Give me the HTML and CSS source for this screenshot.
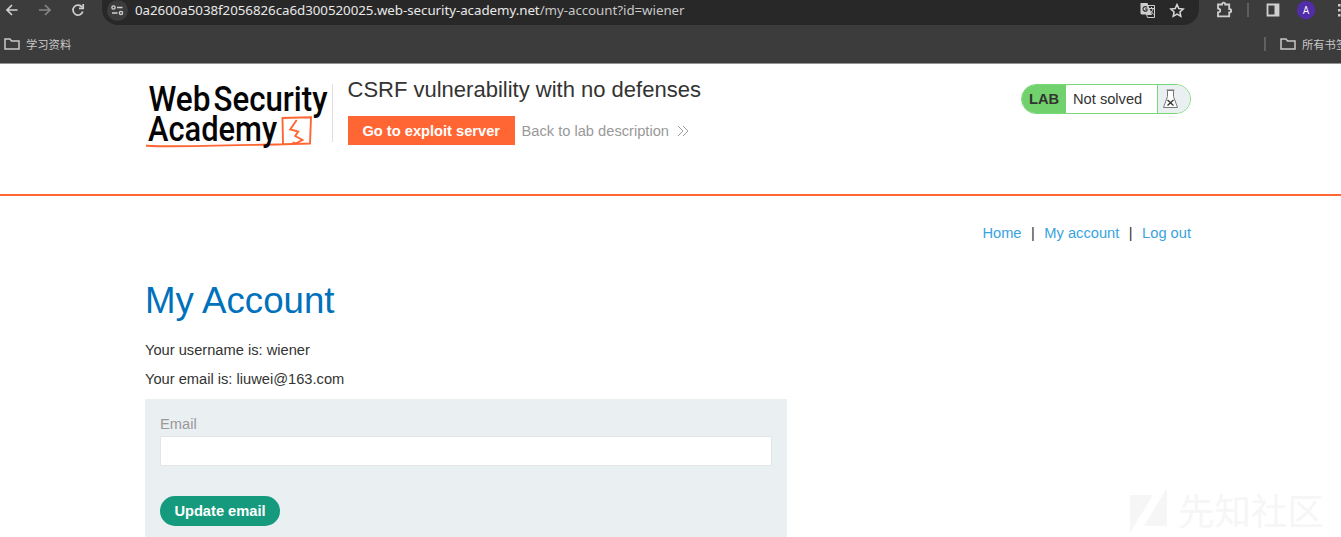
FILE: index.html
```html
<!DOCTYPE html>
<html lang="en">
<head>
<meta charset="utf-8">
<title>CSRF vulnerability with no defenses</title>
<link rel="stylesheet" href="styles.css">
</head>
<body>
<div class="browser">
  <div class="toolbar">
    <svg class="nav-icons" width="100" height="24" viewBox="0 0 100 24" fill="none" stroke="#d0d0d0" stroke-width="1.7">
      <path d="M17.500 10H7.500M12 5L7 10l5 5"/>
      <path stroke="#858585" d="M39 10h10.500M45 5l5 5-5 5"/>
      <path d="M82 7A5 5 0 1 0 82.800 11.500M83.200 4v4.300H79"/>
    </svg>
    <div class="address">
      <div class="site-info">
        <svg width="21" height="21" viewBox="0 0 21 21" fill="none" stroke="#d0d0d0" stroke-width="1.400"><circle cx="6.500" cy="7.500" r="1.600"/><path d="M10 7.500h5.500M5 13h5.500"/><circle cx="14" cy="13" r="1.600"/></svg>
      </div>
      <div class="url"><span class="domain">0a2600a5038f2056826ca6d300520025.web-security-academy.net</span><span class="path">/my-account?id=wiener</span></div>
      <svg class="address-icons" width="48" height="22" viewBox="0 0 48 22">
        <path d="M1.500 3h7l3.700 11.500H2.500l-1-1z" fill="#cecece"/>
        <path d="M8.200 5.500h7.300v12H8.500l-1-3h5z" fill="none" stroke="#cecece"/>
        <path d="M8 7.300A2.300 2.300 0 1 0 8 10.500V9H6" fill="none" stroke="#353535" stroke-width="1.200"/>
        <path d="M10 8.500h5M12.500 7v1.500M14 9c-.5 2-1.500 3-3 4.500M11.500 10.500l3 4" fill="none" stroke="#cecece"/>
        <path d="M38 4.500l1.800 4 4.400.5-3.300 3 .9 4.300-3.800-2.200-3.800 2.200.9-4.300-3.300-3 4.400-.5z" fill="none" stroke="#d8d8d8" stroke-width="1.500"/>
      </svg>
    </div>
    <svg class="right-icons" width="142" height="24" viewBox="0 0 142 24" fill="none" stroke="#cfcfcf" stroke-width="1.800">
      <path d="M19 4.500h4c0-2.400 3.200-2.400 3.200 0h4V9c2.700 0 2.700 3.400 0 3.400v4H19v-4c3-.2 3-3.600 0-3.900z"/>
      <path d="M49 3v14" stroke="#626262"/>
      <path d="M68.500 4.500h11v11h-11z"/><path d="M75.500 4h4v12h-4z" fill="#cfcfcf" stroke="none"/>
      <circle cx="107" cy="10" r="9.200" fill="#512da8" stroke="none"/>
      <text x="107" y="13.500" text-anchor="middle" class="avatar">A</text>
      <path d="M140.300 4v2.500M140.300 9v2.500M140.300 14v2.500" stroke-width="2.500"/>
    </svg>
  </div>
  <div class="bookmarks">
    <svg width="16" height="12" viewBox="0 0 16 12" fill="none" stroke="#c8c8c8" stroke-width="1.500"><path d="M1 1h5l1.500 2H15v8H1z"/></svg>
    <span class="folder-name">学习资料</span>
    <span class="divider"></span>
    <svg width="16" height="12" viewBox="0 0 16 12" fill="none" stroke="#c8c8c8" stroke-width="1.500"><path d="M1 1h5l1.500 2H15v8H1z"/></svg>
    <span class="folder-name">所有书签</span>
  </div>
</div>
<header class="lab-header">
  <svg class="logo" width="187" height="70" viewBox="0 0 187 70">
    <path d="M1 65.500C12 67.500 60 66 138 64.200L137.500 38l28.500-.8-1 26.300-26.500.7" fill="none" stroke="#ff6633" stroke-width="1.900"/>
    <path d="M151.700 40l-6.500 9.500 8 2-3 4.500 7.300 4-6.500 3.300-3.500-1" fill="none" stroke="#ff6633" stroke-width="1.900"/>
    <g class="logo-text">
      <text x="3.500" y="31" textLength="62" lengthAdjust="spacingAndGlyphs">Web</text>
      <text x="68.500" y="31" textLength="114" lengthAdjust="spacingAndGlyphs">Security</text>
      <text x="3" y="60.700" textLength="129" lengthAdjust="spacingAndGlyphs">Academy</text>
    </g>
  </svg>
  <div class="lab-title">
    <h2>CSRF vulnerability with no defenses</h2>
    <div class="actions">
      <a class="exploit">Go to exploit server</a>
      <a class="back">Back to lab description</a>
      <svg width="12" height="12" viewBox="0 0 12 12" fill="none" stroke="#a0a0a0"><path d="M1 1l5 5-5 5M6 1l5 5-5 5"/></svg>
    </div>
  </div>
  <div class="status">
    <strong>LAB</strong><span>Not solved</span>
    <div class="flask"><svg width="17" height="20" viewBox="0 0 17 20" fill="none" stroke="#777"><path fill="#fff" d="M5.500 1.500v6L1.500 18.500h14l-4-11v-6z"/><path d="M4.500 1h8"/><path stroke="#333" stroke-width="1.300" d="M5.500 11l6 5.500M11.500 11l-6 5.500"/></svg></div>
  </div>
</header>
<main class="content">
  <nav><a>Home</a><span>|</span><a>My account</a><span>|</span><a>Log out</a></nav>
  <h1>My Account</h1>
  <p>Your username is: wiener</p>
  <p>Your email is: liuwei@163.com</p>
  <form>
    <label for="email">Email</label>
    <input id="email" type="email">
    <button type="button">Update email</button>
  </form>
</main>
<div class="watermark">
  <svg width="39" height="46" viewBox="0 0 39 46" fill="#f6f6f6"><path d="M1 7h23L1 45zM38 0v38H15z"/></svg>
  <span>先知社区</span>
</div>
</body>
</html>
```
FILE: styles.css
```css
* { box-sizing: border-box; }
body {
  margin: 0;
  height: 537px;
  overflow: hidden;
  position: relative;
  background: #fff;
  color: #333332;
  font: 14.67px/20px "Liberation Sans", Arial, sans-serif;
}
.browser {
  height: 64px;
  background: #3c3c3c;
  border-bottom: 1px solid #929292;
  overflow: hidden;
}
.toolbar { display: flex; height: 25px; }
.nav-icons { margin-right: 2px; flex: none; }
.address {
  display: flex;
  width: 1097px;
  height: 25px;
  flex: none;
  background: #282828;
  border-radius: 0 0 16px 16px;
}
.site-info {
  width: 21px;
  height: 21px;
  margin-left: 5px;
  border-radius: 50%;
  background: #3c3c3c;
}
.url {
  width: 1004px;
  margin-left: 7px;
  white-space: nowrap;
  font: 13.33px/20px "Noto Sans", sans-serif;
  letter-spacing: -0.045px;
}
.domain { color: #e8e8e8; }
.path { color: #c7c7c7; }
.address-icons { flex: none; }
.right-icons { flex: none; }
.avatar { fill: #fff; stroke: none; font: 10px Roboto, sans-serif; }
.bookmarks {
  display: flex;
  align-items: center;
  height: 38px;
  padding-left: 4px;
}
.bookmarks svg { flex: none; }
.folder-name {
  margin-left: 6px;
  color: #c9c9c9;
  white-space: nowrap;
  font: 11.3px/16px "Noto Sans CJK SC", sans-serif;
}
.divider { width: 2px; height: 14px; margin: 0 14px 0 auto; background: #606060; flex: none; }
.bookmarks .folder-name:last-child { width: 39px; }
.lab-header {
  display: flex;
  height: 132px;
  padding: 16px 150px 0 145px;
  border-bottom: 2px solid #ff6633;
}
.logo { flex: none; }
.logo-text { font: 500 35px Roboto, sans-serif; fill: #050505; }
.lab-title { height: 58px; margin-top: 4px; padding-left: 14.500px; border-left: 1px solid #dedede; }
h2 { margin: -7px 0 13px; font-size: 22px; font-weight: 400; line-height: 26px; }
.actions { display: flex; align-items: center; white-space: nowrap; }
.exploit {
  width: 167.500px;
  height: 29px;
  background: #ff6633;
  color: #fff;
  font-weight: 700;
  line-height: 30px;
  text-align: center;
}
.back { margin: 0 8px 0 6.500px; color: #999; }
.status {
  display: flex;
  width: 170px;
  height: 30px;
  margin: 4px 0 0 auto;
  border: 1px solid #77d877;
  border-radius: 15px;
  overflow: hidden;
  line-height: 28px;
}
.status strong { width: 44px; padding-left: 7px; background: #70d16d; }
.status span { width: 91px; padding-left: 7px; }
.flask { display: flex; align-items: center; flex: 1; padding-left: 4px; border-left: 1px solid #77d877; background: #eaeff2; }
.content { padding: 27px 150px 0 145px; }
nav { display: flex; justify-content: flex-end; gap: 9.500px; }
nav a { color: #39a3de; }
h1 { margin: 37px 0 18px; color: #0071bb; font-size: 36.670px; font-weight: 400; line-height: 42px; }
p { margin: 0 0 9px; line-height: 20px; }
form {
  width: 642px;
  height: 150px;
  margin-top: 10px;
  padding: 15px 15px 0;
  background: #eaeff2;
}
label { display: block; height: 22px; color: #999; }
input { display: block; width: 100%; height: 30px; border: 1px solid #e3e5e6; background: #fff; outline: 0; }
button {
  width: 120px;
  height: 30px;
  margin-top: 30px;
  padding: 0 0 1px;
  border: 0;
  border-radius: 15px;
  background: #159a7e;
  color: #fff;
  font: 700 14.67px "Liberation Sans", Arial, sans-serif;
}
.watermark {
  position: absolute;
  left: 1129px;
  top: 488px;
  display: flex;
  gap: 10px;
  color: #f6f6f6;
  font: 36.500px/44px "Noto Sans CJK SC", sans-serif;
}
```
